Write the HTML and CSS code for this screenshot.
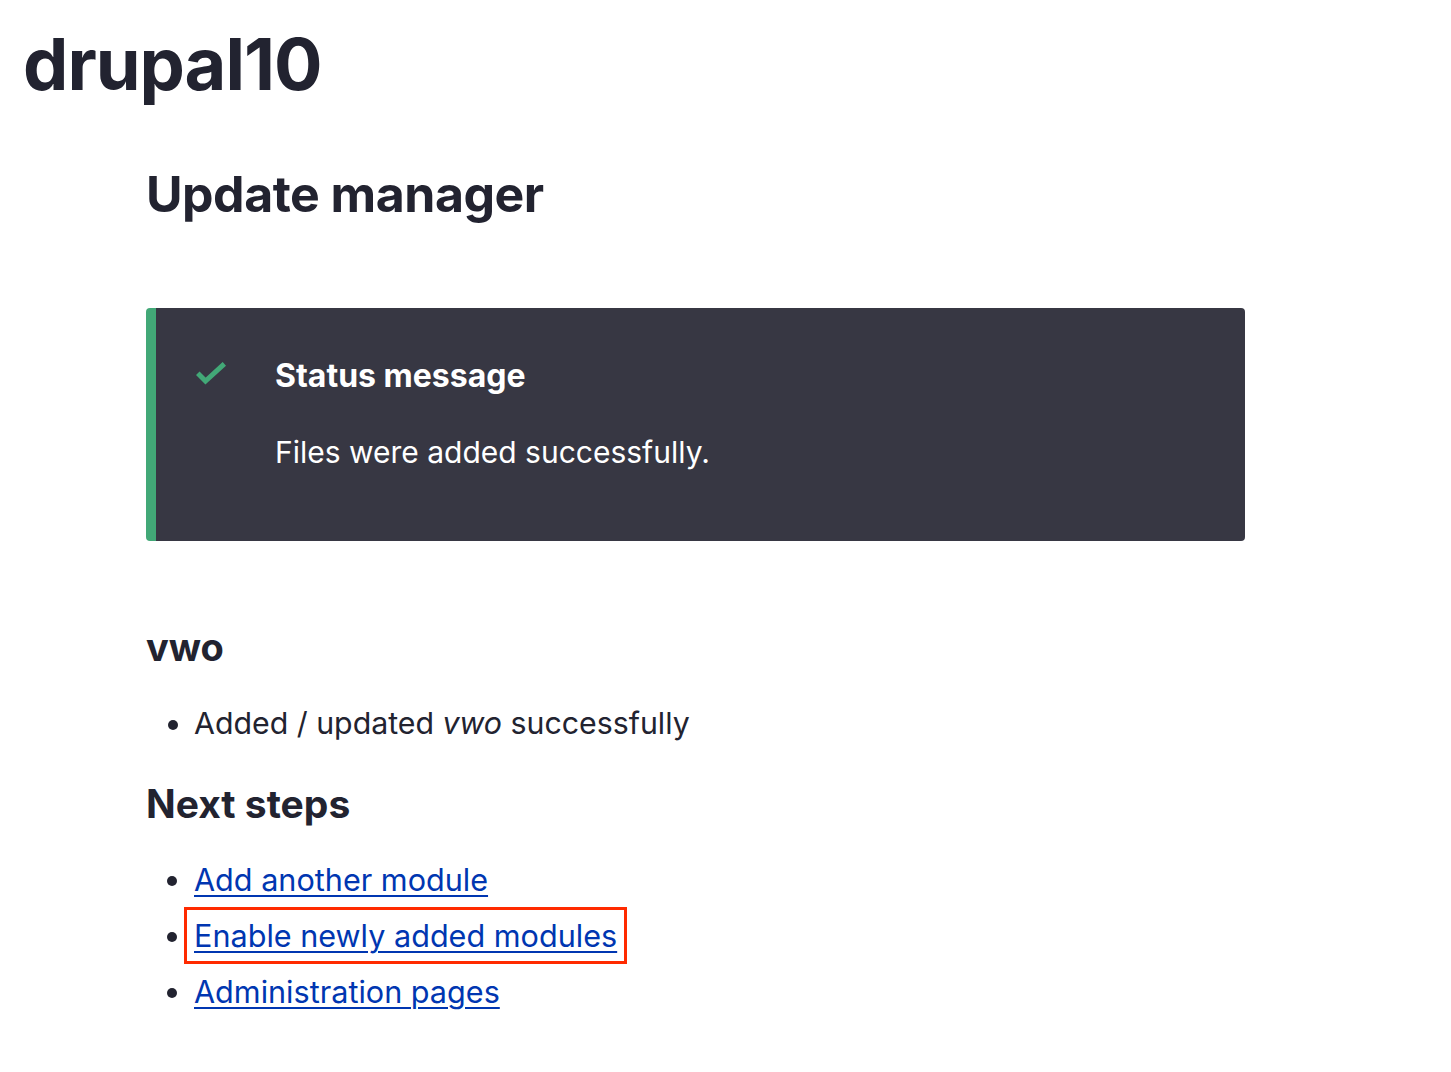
FILE: index.html
```html
<!DOCTYPE html>
<html lang="en">
<head>
<meta charset="utf-8">
<title>Update manager | drupal10</title>
<link rel="stylesheet" href="styles.css">
</head>
<body>
<header class="site-header">
  <div class="site-name">drupal10</div>
</header>
<main class="main">
  <h1 class="page-title">Update manager</h1>
  <div class="messages" role="status">
    <div class="messages-icon">
      <svg width="30" height="24" viewBox="0 0 30 24" aria-hidden="true"><path d="M3.5 13 L9.5 19 L26.5 3.5" fill="none" stroke="#42a877" stroke-width="5" stroke-linecap="square"/></svg>
    </div>
    <div class="messages-content">
      <h2 class="messages-title">Status message</h2>
      <div class="messages-text">Files were added successfully.</div>
    </div>
  </div>
  <h3 class="project">vwo</h3>
  <ul class="list">
    <li>Added / updated <em>vwo</em> successfully</li>
  </ul>
  <h3 class="steps-title">Next steps</h3>
  <ul class="list links">
    <li><a href="#">Add another module</a></li>
    <li><a class="highlight" href="#">Enable newly added modules</a></li>
    <li><a href="#">Administration pages</a></li>
  </ul>
</main>
</body>
</html>
```
FILE: styles.css
```css
html, body {
  margin: 0;
  padding: 0;
  background: #fff;
}
body {
  font-family: Inter, "Noto Sans", "Liberation Sans", sans-serif;
  color: #222330;
}
.site-header {
  padding: 24px 0 0 23px;
}
.site-name {
  font-size: 72px;
  font-weight: 700;
  line-height: 80px;
  letter-spacing: -1px;
}
.main {
  padding-left: 146px;
  width: 1099px;
}
.page-title {
  margin: 60px 0 0;
  font-size: 50px;
  line-height: 60px;
  font-weight: 700;
  letter-spacing: -0.5px;
}
.messages {
  margin-top: 84px;
  display: flex;
  background: #373743;
  border-left: 10px solid #42a877;
  border-radius: 4px;
  min-height: 233px;
  box-sizing: border-box;
  padding: 48px 40px;
  color: #fff;
}
.messages-icon {
  width: 79px;
  flex: none;
  padding-top: 6px;
  box-sizing: border-box;
}
.messages-title {
  margin: 0;
  font-size: 32px;
  line-height: 40px;
  font-weight: 700;
}
.messages-text {
  margin-top: 36px;
  font-size: 30px;
  line-height: 40px;
}
.project {
  margin: 84px 0 0;
  font-size: 38px;
  line-height: 44px;
  font-weight: 700;
}
.list {
  margin: 26px 0 0;
  padding-left: 48px;
  font-size: 30.3px;
  line-height: 56px;
}
.steps-title {
  margin: 29px 0 0;
  font-size: 39px;
  line-height: 48px;
  font-weight: 700;
}
.links {
  margin-top: 24px;
  font-size: 30.6px;
}
.links a {
  color: #0036b1;
  text-decoration: underline;
  text-decoration-thickness: 2px;
  text-underline-offset: 4px;
}
.highlight {
  outline: 3px solid #ff2a00;
  outline-offset: 7px;
}
```
